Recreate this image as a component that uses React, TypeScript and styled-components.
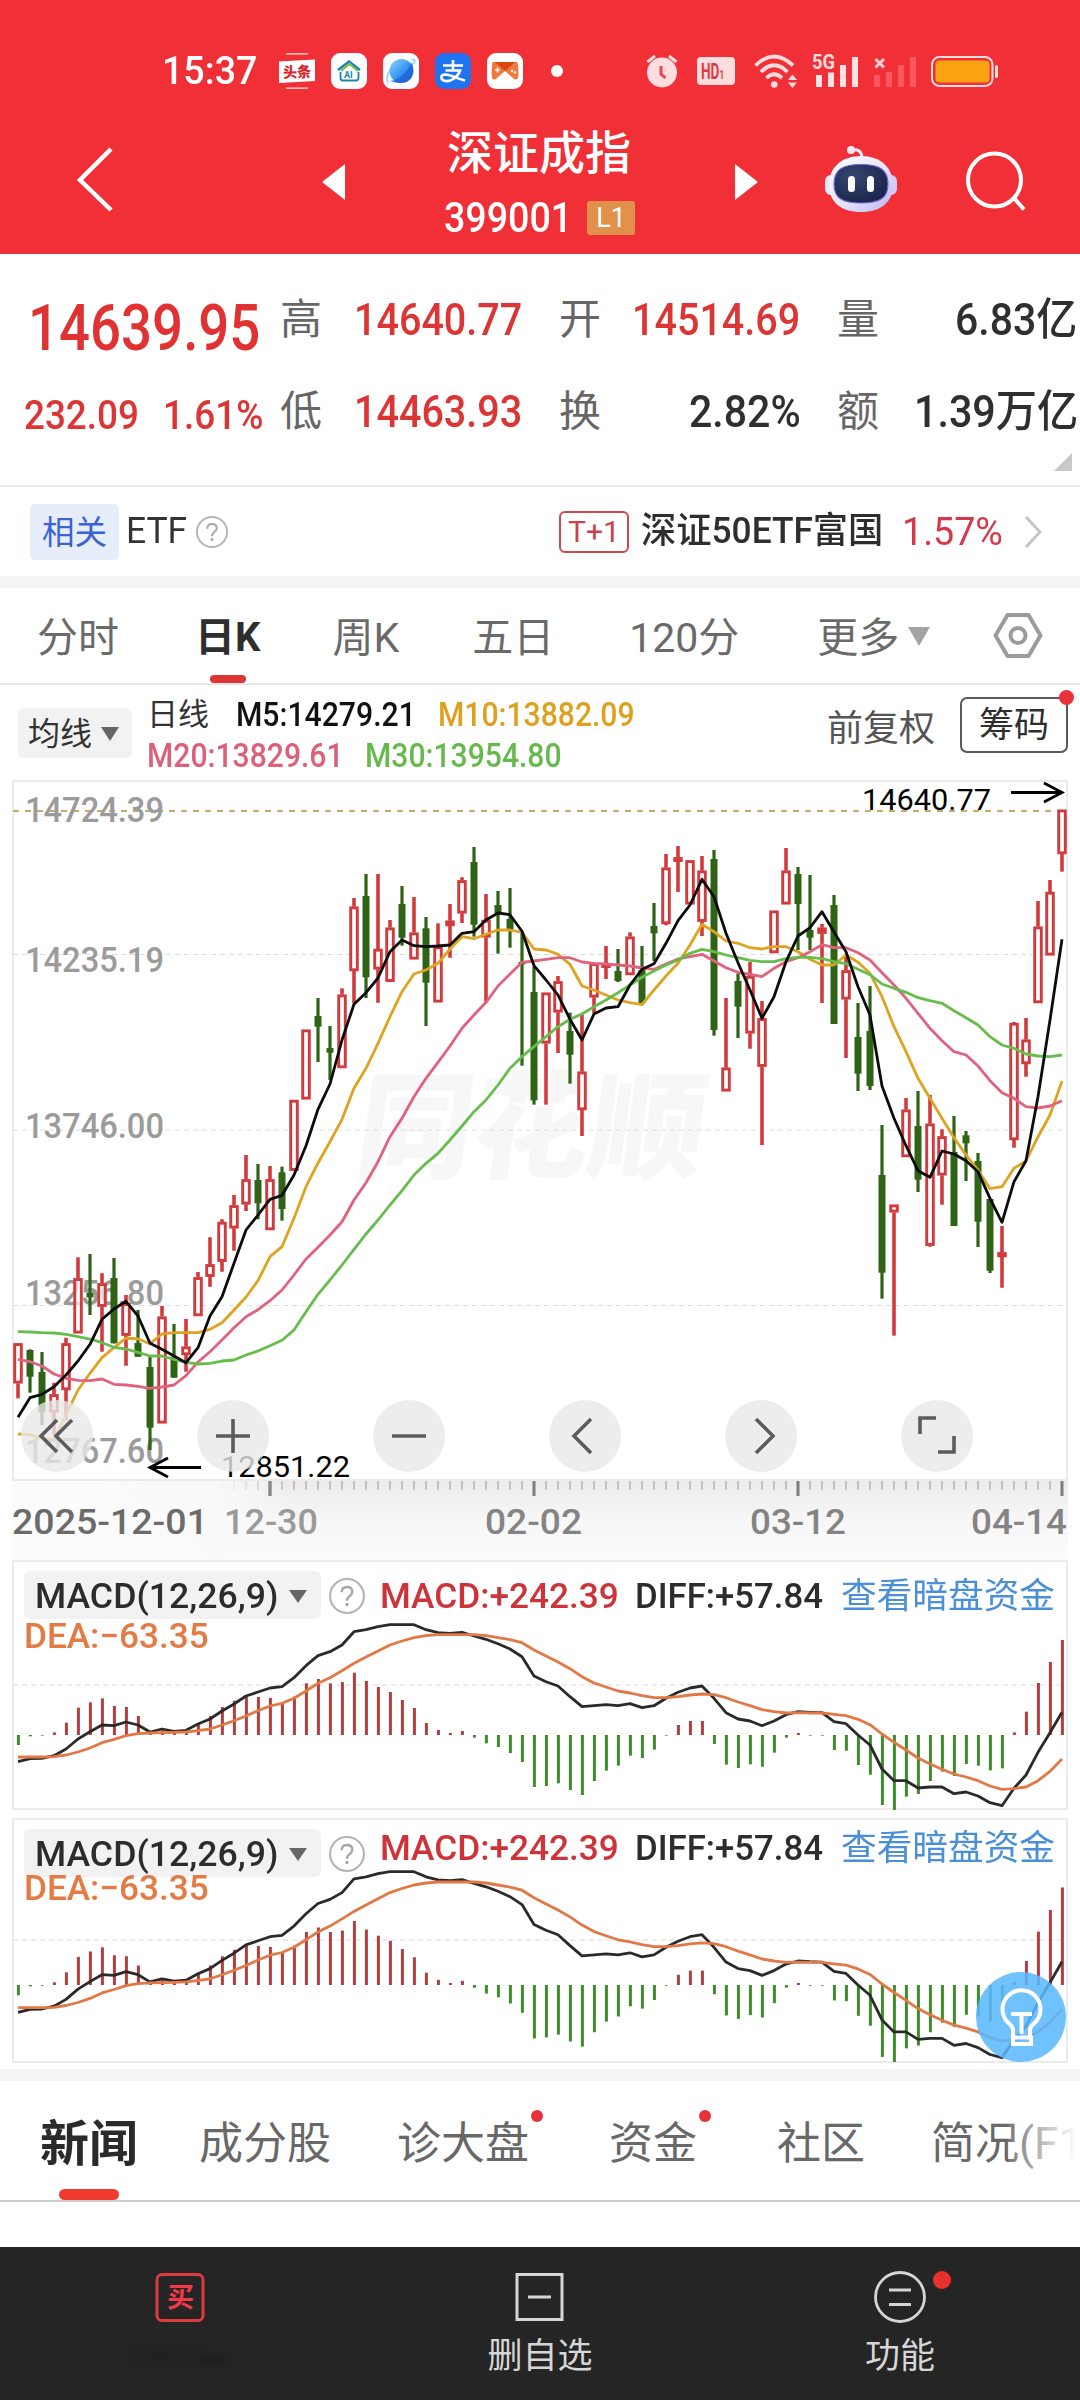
import React, { useLayoutEffect, useRef, useState } from "react";
import styled, { createGlobalStyle, css } from "styled-components";

const Global = createGlobalStyle`
  *, *::before, *::after { box-sizing: border-box; }
  body { margin: 0; background: #fff; }
  #root { width: 1080px; }
`;

const FONT = `Roboto, "Noto Sans CJK SC", sans-serif`;

/* ---------- text ---------- */

type TextProps = {
  $size: number;
  $color?: string;
  $weight?: number;
  $ml?: number;
};

const textStyle = css<TextProps>`
  font-family: ${FONT};
  font-size: ${(p) => p.$size}px;
  line-height: ${(p) => Math.round(p.$size * 1.2)}px;
  color: ${(p) => p.$color ?? "#333"};
  font-weight: ${(p) => p.$weight ?? 400};
  margin-left: ${(p) => p.$ml ?? 0}px;
  white-space: nowrap;
`;

const Label = styled.span<TextProps>`
  ${textStyle}
  flex: none;
`;

const FitBox = styled.span<TextProps & { $w: number }>`
  ${textStyle}
  display: block;
  flex: none;
  width: ${(p) => p.$w}px;
`;

const FitInner = styled.span`
  display: inline-block;
  transform-origin: 0 50%;
`;

type FitProps = {
  w: number;
  size: number;
  color?: string;
  weight?: number;
  ml?: number;
  children: string;
};

/** Condenses or widens a run of figures so that it fills a fixed column. */
function Fit({ w, size, color, weight, ml, children }: FitProps) {
  const ref = useRef<HTMLSpanElement>(null);
  const [k, setK] = useState(1);
  useLayoutEffect(() => {
    if (ref.current) setK(w / ref.current.offsetWidth);
  }, [w, children]);
  return (
    <FitBox $w={w} $size={size} $color={color} $weight={weight} $ml={ml}>
      <FitInner ref={ref} style={{ transform: `scaleX(${k})` }}>
        {children}
      </FitInner>
    </FitBox>
  );
}

/* ---------- page ---------- */

const Page = styled.div`
  width: 1080px;
  height: 2400px;
  display: flex;
  flex-direction: column;
  background: #fff;
  overflow: hidden;
`;

const Head = styled.header`
  height: 254px;
  flex: none;
  background: #f12f37;
  display: flex;
  flex-direction: column;
`;

const StatusBar = styled.div`
  height: 142px;
  padding: 0 82px 0 162px;
  display: flex;
  align-items: center;
`;

const AppIcons = styled.div`
  display: flex;
  gap: 16px;
  margin-left: 22px;
  align-items: center;
`;

const Drawing = styled.svg<{ $ml?: number }>`
  display: block;
  flex: none;
  overflow: visible;
  margin-left: ${(p) => p.$ml ?? 0}px;
`;

const StatusRight = styled.div`
  margin-left: auto;
  display: flex;
  align-items: center;
`;

const TitleBar = styled.div`
  height: 112px;
  display: flex;
  align-items: flex-start;
`;

const TitleBlock = styled.div`
  margin-left: 96px;
  width: 196px;
  margin-top: -16px;
  display: flex;
  flex-direction: column;
  align-items: center;
`;

const CodeRow = styled.div`
  display: flex;
  align-items: center;
  margin-top: 12px;
  width: 196px;
`;

const Level = styled.span`
  margin-left: 15px;
  width: 48px;
  height: 34px;
  border-radius: 3px;
  background: #e2914b;
  color: #fff;
  font: 400 27px/34px ${FONT};
  text-align: center;
`;

function StatusRow() {
  return (
    <StatusBar>
      <Fit w={95} size={38} weight={500} color="#fff">15:37</Fit>
      <AppIcons>
        <Drawing width="36" height="36" viewBox="0 0 36 36">
          <path d="M7 .8H29M7 35.2H29" stroke="#ffe6e6" strokeWidth="1.2" />
          <path d="M0 8.5L36 6.500V28L0 30z" fill="#fff" />
          <text x="4" y="24.500" fontSize="15" fontWeight="900" fill="#d8262c" fontFamily="Noto Sans CJK SC, sans-serif" textLength="28" lengthAdjust="spacingAndGlyphs" transform="rotate(-2 18 18)">头条</text>
        </Drawing>
        <Drawing width="36" height="36" viewBox="0 0 36 36">
          <rect width="36" height="36" rx="9" fill="#fff" />
          <path d="M7 17L18 8.500L29 17" stroke="#1a7fc0" strokeWidth="2.400" fill="none" />
          <path d="M10 18L18.500 11L27 18" stroke="#7ac043" strokeWidth="2.200" fill="none" />
          <path d="M9.500 19V25Q9.500 27.500 12 27.500H25Q27.500 27.500 27.500 25V19" stroke="#1a86b8" strokeWidth="1.800" fill="none" />
          <text x="13" y="25" fontSize="9" fontWeight="700" fill="#1a86b8" fontFamily="Roboto, sans-serif">AI</text>
        </Drawing>
        <Drawing width="36" height="36" viewBox="0 0 36 36">
          <defs>
            <linearGradient id="globe" x1="0" y1="0" x2="1" y2="1">
              <stop offset="0" stopColor="#8ad6ff" />
              <stop offset=".6" stopColor="#2f8cf0" />
              <stop offset="1" stopColor="#1456c8" />
            </linearGradient>
          </defs>
          <rect width="36" height="36" rx="9" fill="#fff" />
          <path d="M5 30Q2 24 8 16M29 7Q33 5 31 11" stroke="#9fd8fb" strokeWidth="2" fill="none" />
          <circle cx="18.500" cy="18" r="12" fill="url(#globe)" />
          <path d="M7 28Q21 26 29 9Q32 18 27 25Q20 33 7 28z" fill="#1d62d8" opacity=".75" />
        </Drawing>
        <Drawing width="36" height="36" viewBox="0 0 36 36">
          <rect width="36" height="36" rx="9" fill="#1e73f0" />
          <path d="M8 12.500H28M18 7V17M10.500 17.500H25C23 24 16 29 10.500 28C5 27 5 21.500 10.500 21.500C16 21.500 22 26 30 27.500" stroke="#fff" strokeWidth="2.600" fill="none" />
        </Drawing>
        <Drawing width="36" height="36" viewBox="0 0 36 36">
          <rect width="36" height="36" rx="9" fill="#fff" />
          <path d="M5.500 9H30.500Q32 18 31 25Q29 28 26 25L18 18L10 25Q7 28 5 25Q4 18 5.500 9z" fill="#f07a3c" />
          <path d="M8 9H28L18 18z" fill="#d9480f" />
          <path d="M8 17H13M10.500 14.500V19.500" stroke="#fff" strokeWidth="1.500" />
          <circle cx="25" cy="18" r="1.200" fill="#fff" />
          <circle cx="28" cy="19.500" r="1.200" fill="#fff" />
        </Drawing>
      </AppIcons>
      <Drawing $ml={28} width="12" height="12"><circle cx="6" cy="6" r="6" fill="#fff" /></Drawing>
      <StatusRight>
        <Drawing width="32" height="34" viewBox="0 0 32 34">
          <circle cx="16" cy="18.500" r="15" fill="#ffdcdd" />
          <path d="M1.500 8L9 2M23 2L30.500 8" stroke="#ffdcdd" strokeWidth="3" />
          <path d="M15 12V20L19.500 24" stroke="#e8444b" strokeWidth="3" fill="none" />
        </Drawing>
        <Drawing $ml={19} width="38" height="28" viewBox="0 0 38 28">
          <rect width="38" height="28" rx="4" fill="#ffdcdd" />
          <text x="4" y="22" fontSize="22" fontWeight="700" fill="#dd3b42" fontFamily="Roboto, sans-serif" textLength="23" lengthAdjust="spacingAndGlyphs">HD<tspan fontSize="13">1</tspan></text>
        </Drawing>
        <Drawing $ml={19} width="44" height="34" viewBox="0 0 44 34">
          <g stroke="#ffdcdd" fill="none" strokeWidth="3.800">
            <path d="M1.500 11.500Q20 -6.500 39 11.500" />
            <path d="M7 18Q20 4.500 33.500 18" />
            <path d="M12.500 24Q20 16.500 28 24" />
          </g>
          <circle cx="20.300" cy="30.500" r="3.300" fill="#ffdcdd" />
          <path d="M34 26L38.500 20.500L43 26zM34 28.500L38.500 34L43 28.500z" fill="#ffdcdd" />
        </Drawing>
        <Drawing $ml={14} width="47" height="34" viewBox="0 0 47 34">
          <text x="0" y="15" fontSize="20" fontWeight="700" fill="#ffdcdd" fontFamily="Roboto, sans-serif" textLength="23" lengthAdjust="spacingAndGlyphs">5G</text>
          <path d="M4 21h6v12h-6zM16 18.500h6V33h-6zM28 11h6V33h-6zM40 3h6V33h-6z" fill="#ffe3e4" />
        </Drawing>
        <Drawing $ml={15} width="43" height="34" viewBox="0 0 43 34">
          <path d="M1.500 5L10 13.500M10 5L1.500 13.500" stroke="#ffd0d2" strokeWidth="3" />
          <path d="M0 21h6v12h-6zM12 18h6V33h-6zM24 11h6V33h-6zM36 3h6V33h-6z" fill="#f8575e" />
        </Drawing>
        <Drawing $ml={14} width="67" height="31" viewBox="0 0 67 31">
          <rect x="1" y="1" width="60.500" height="29" rx="7.500" fill="none" stroke="#ffdcdd" strokeWidth="2" />
          <rect x="4.500" y="4.500" width="54" height="22" rx="4" fill="#fca313" />
          <rect x="64" y="9" width="3" height="13" rx="1.500" fill="#ffdcdd" />
        </Drawing>
      </StatusRight>
    </StatusBar>
  );
}

function TitleRow() {
  return (
    <TitleBar>
      <Drawing $ml={77} width="36" height="74">
        <path d="M34 7L3 38L34 68" fill="none" stroke="#fff" strokeWidth="4.500" />
      </Drawing>
      <Drawing $ml={209} width="23" height="74"><path d="M23 22V58L0 40z" fill="#fff" /></Drawing>
      <TitleBlock>
        <Label $size={46} $weight={500} $color="#fff">深证成指</Label>
        <CodeRow>
          <Fit w={128} size={42} weight={500} color="#fff" ml={3}>399001</Fit>
          <Level>L1</Level>
        </CodeRow>
      </TitleBlock>
      <Drawing $ml={98} width="23" height="74"><path d="M0 22V58L23 40z" fill="#fff" /></Drawing>
      <Drawing $ml={67} width="72" height="74" viewBox="0 0 72 74">
        <defs>
          <linearGradient id="shell" x1="0" y1="0" x2="1" y2="1">
            <stop offset="0" stopColor="#ffffff" />
            <stop offset=".55" stopColor="#e4e6fb" />
            <stop offset="1" stopColor="#b9b0ee" />
          </linearGradient>
          <radialGradient id="visor" cx=".35" cy=".3" r=".9">
            <stop offset="0" stopColor="#35466f" />
            <stop offset="1" stopColor="#141f42" />
          </radialGradient>
        </defs>
        <path d="M26 8Q36 6 37 15" stroke="#f4eefc" strokeWidth="3" fill="none" />
        <circle cx="26" cy="8" r="4" fill="#fbe9ee" />
        <rect x="0" y="33" width="12" height="20" rx="6" fill="#e6e6fa" />
        <rect x="60" y="33" width="12" height="20" rx="6" fill="#d3cdf6" />
        <path d="M36 14C56 14 68 26 68 43C68 60 56 70 36 70C16 70 4 60 4 43C4 26 16 14 36 14z" fill="url(#shell)" />
        <path d="M36 22.500C55 22.500 63 28 63 42C63 56 55 61 36 61C17 61 9 56 9 42C9 28 17 22.500 36 22.500z" fill="url(#visor)" stroke="#7a63d8" strokeWidth="1.200" />
        <rect x="23" y="34" width="7" height="16" rx="3.500" fill="#fff" />
        <rect x="42" y="34" width="7" height="16" rx="3.500" fill="#fff" />
      </Drawing>
      <Drawing $ml={69} width="60" height="74">
        <circle cx="28.500" cy="38" r="26.500" fill="none" stroke="#fff" strokeWidth="4" />
        <path d="M48 56L58 67.500" stroke="#fff" strokeWidth="4" />
      </Drawing>
    </TitleBar>
  );
}

/* ---------- quote ---------- */

const Quote = styled.section`
  height: 233px;
  flex: none;
  border-bottom: 2px solid #ececec;
  display: grid;
  grid-template-rows: 130px 56px 1fr;
`;

const QuoteRow = styled.div`
  display: flex;
  align-items: center;
  &:first-child { padding-top: 2px; }
`;

const Corner = styled.i`
  justify-self: end;
  margin: 13px 8px 0 0;
  width: 18px;
  height: 18px;
  background: #c9c9c9;
  clip-path: polygon(100% 0, 100% 100%, 0 100%);
`;

const RED = "#dc3535";
const GREY = "#666";

const PriceLead = styled.div<{ $top?: number }>`
  width: 280px;
  display: flex;
  padding-top: ${(p) => p.$top ?? 0}px;
`;

function QuotePanel() {
  return (
    <Quote>
      <QuoteRow>
        <PriceLead $top={17}>
          <Fit w={232} size={64} weight={500} color="#e03232" ml={28}>14639.95</Fit>
        </PriceLead>
        <Label $size={42} $color={GREY}>高</Label>
        <Fit w={168} size={44} weight={500} color={RED} ml={32}>14640.77</Fit>
        <Label $size={42} $color={GREY} $ml={37}>开</Label>
        <Fit w={168} size={44} weight={500} color={RED} ml={31}>14514.69</Fit>
        <Label $size={42} $color={GREY} $ml={37}>量</Label>
        <Fit w={122} size={44} weight={500} color="#2f2f2f" ml={76}>6.83亿</Fit>
      </QuoteRow>
      <QuoteRow>
        <PriceLead $top={6}>
          <Fit w={115} size={41} weight={500} color={RED} ml={24}>232.09</Fit>
          <Fit w={101} size={41} weight={500} color={RED} ml={24}>1.61%</Fit>
        </PriceLead>
        <Label $size={42} $color={GREY}>低</Label>
        <Fit w={168} size={44} weight={500} color={RED} ml={32}>14463.93</Fit>
        <Label $size={42} $color={GREY} $ml={37}>换</Label>
        <Fit w={112} size={44} weight={500} color="#2f2f2f" ml={88}>2.82%</Fit>
        <Label $size={42} $color={GREY} $ml={36}>额</Label>
        <Fit w={164} size={44} weight={500} color="#2f2f2f" ml={35}>1.39万亿</Fit>
      </QuoteRow>
      <Corner />
    </Quote>
  );
}

/* ---------- related fund ---------- */

const Related = styled.section`
  height: 89px;
  flex: none;
  display: flex;
  align-items: center;
  padding-left: 30px;
`;

const BlueTag = styled.span`
  width: 89px;
  height: 56px;
  border-radius: 5px;
  background: #e6eefc;
  color: #3c63d6;
  font: 400 32.5px/58px ${FONT};
  text-align: center;
`;

const DayTag = styled.span`
  margin-left: 331px;
  width: 70px;
  height: 42px;
  border: 2px solid #cb4a52;
  border-radius: 6px;
  color: #cf3f49;
  font: 400 30px/38px ${FONT};
  text-align: center;
`;

const Band = styled.div`
  height: 12px;
  flex: none;
  background: #f4f4f4;
`;

function Question({ r, ml }: { r: number; ml: number }) {
  const s = r * 2;
  return (
    <Drawing $ml={ml} width={s} height={s} viewBox="0 0 34 34">
      <circle cx="17" cy="17" r="16" fill="none" stroke="#b4b4b4" strokeWidth="2" />
      <path d="M12 13.500Q12 8.500 17 8.500Q22 8.500 22 13Q22 15.500 19 17.500Q17 19 17 21.500" fill="none" stroke="#a8a8a8" strokeWidth="2.200" />
      <circle cx="17" cy="25" r="1.600" fill="#a8a8a8" />
    </Drawing>
  );
}

/* ---------- period tabs ---------- */

const Periods = styled.nav`
  height: 97px;
  flex: none;
  border-bottom: 2px solid #e6e6e6;
  display: flex;
  align-items: stretch;
`;

const Period = styled.div<{ $ml: number; $on?: boolean }>`
  margin-left: ${(p) => p.$ml}px;
  display: flex;
  flex-direction: column;
  align-items: center;
  font: ${(p) => (p.$on ? 700 : 400)} ${(p) => (p.$on ? 40 : 41)}px/100px ${FONT};
  color: ${(p) => (p.$on ? "#2e2e2e" : "#6a6a6a")};
  white-space: nowrap;
  &::after {
    content: "";
    width: 36px;
    height: 9px;
    margin-top: -13px;
    border-radius: 4px;
    background: ${(p) => (p.$on ? "#dd3434" : "transparent")};
  }
`;

/* ---------- averages ---------- */

const Averages = styled.section`
  height: 95px;
  flex: none;
  display: flex;
`;

const Picker = styled.div<{ $w: number; $h: number }>`
  width: ${(p) => p.$w}px;
  height: ${(p) => p.$h}px;
  flex: none;
  display: flex;
  align-items: center;
  border-radius: 6px;
  background: #f2f2f2;
`;

const AveragePicker = styled(Picker)`
  margin: 23px 0 0 18px;
  padding: 2px 0 0 10px;
`;

const AverageLines = styled.div`
  width: 695px;
  padding: 9px 0 0 15px;
`;

const AverageLine = styled.div`
  height: 41px;
  display: flex;
  align-items: center;
`;

const ChipButton = styled.div`
  position: relative;
  margin: 12px 0 0 25px;
  width: 108px;
  height: 56px;
  border: 2px solid #5a5a5a;
  border-radius: 7px;
  font: 400 35px/54px ${FONT};
  color: #2e2e2e;
  text-align: center;
`;

const Adjust = styled.div`
  margin-top: 23px;
  font: 400 36px/43px ${FONT};
  color: #555;
`;

const Dot = styled.i<{ $s: number; $top: number; $right: number }>`
  position: absolute;
  top: ${(p) => p.$top}px;
  right: ${(p) => p.$right}px;
  width: ${(p) => p.$s}px;
  height: ${(p) => p.$s}px;
  border-radius: 50%;
  background: #e8313a;
`;

const Caret = ({ ml, w, h, c }: { ml: number; w: number; h: number; c: string }) => (
  <Drawing $ml={ml} width={w} height={h}>
    <path d={`M0 0H${w}L${w / 2} ${h}z`} fill={c} />
  </Drawing>
);

/* ---------- candle chart ---------- */

type Candle = [up: 0 | 1, high: number, top: number, bottom: number, low: number];

// Vertical values are thirds of a pixel below the chart's origin.
const CANDLES: Candle[] = [
  [1, 1720, 1720, 1840, 1885], [0, 1738, 1740, 1820, 1868], [0, 1746, 1806, 1927, 1965], [1, 1838, 1873, 1927, 1995],
  [1, 1703, 1720, 1860, 1950], [1, 1462, 1525, 1690, 1690], [0, 1452, 1568, 1582, 1635], [1, 1510, 1540, 1610, 1745],
  [0, 1464, 1524, 1720, 1720], [1, 1575, 1600, 1697, 1787], [0, 1620, 1719, 1760, 1760], [0, 1760, 1791, 1973, 2040],
  [1, 1608, 1640, 1960, 1960], [0, 1662, 1760, 1823, 1823], [1, 1647, 1730, 1755, 1805], [1, 1506, 1522, 1638, 1638],
  [1, 1402, 1483, 1520, 1550], [1, 1348, 1356, 1475, 1505], [1, 1275, 1306, 1375, 1442], [1, 1155, 1228, 1303, 1323],
  [0, 1182, 1230, 1300, 1348], [1, 1188, 1228, 1380, 1380], [0, 1190, 1207, 1317, 1352], [1, 990, 990, 1202, 1202],
  [1, 779, 779, 988, 988], [0, 684, 738, 770, 876], [0, 768, 834, 848, 930], [1, 655, 674, 894, 894],
  [1, 384, 410, 603, 700], [0, 312, 378, 622, 684], [1, 312, 537, 598, 698], [1, 450, 473, 635, 635],
  [0, 348, 402, 503, 527], [1, 381, 488, 568, 568], [0, 441, 475, 638, 768], [1, 460, 530, 697, 697],
  [1, 402, 452, 468, 563], [1, 322, 331, 430, 459], [0, 231, 276, 464, 500], [1, 372, 450, 502, 695],
  [0, 363, 405, 430, 551], [0, 354, 447, 478, 533], [0, 485, 576, 583, 887], [0, 590, 666, 991, 1004],
  [1, 668, 668, 820, 1004], [1, 618, 634, 727, 849], [0, 728, 783, 854, 941], [1, 735, 905, 1020, 1098],
  [1, 580, 580, 682, 730], [1, 528, 580, 590, 627], [0, 537, 603, 633, 636], [1, 487, 500, 615, 615],
  [0, 528, 600, 700, 700], [0, 399, 468, 490, 573], [1, 252, 293, 462, 466], [1, 228, 262, 272, 366],
  [1, 271, 271, 403, 403], [1, 258, 302, 455, 498], [0, 240, 267, 780, 797], [1, 684, 893, 964, 964],
  [0, 610, 633, 710, 804], [1, 576, 618, 790, 836], [1, 693, 745, 890, 1125], [1, 422, 422, 549, 549],
  [1, 234, 302, 403, 403], [0, 291, 312, 402, 540], [0, 315, 480, 503, 540], [1, 462, 473, 491, 699],
  [0, 375, 405, 762, 762], [1, 555, 601, 688, 864], [0, 699, 801, 911, 963], [0, 648, 783, 948, 960],
  [0, 1065, 1215, 1508, 1586], [1, 1304, 1304, 1327, 1697], [1, 984, 1019, 1161, 1161], [0, 963, 1068, 1229, 1266],
  [1, 975, 1061, 1427, 1430], [1, 1078, 1099, 1216, 1304], [0, 1038, 1146, 1368, 1368], [0, 1083, 1096, 1120, 1233],
  [0, 1149, 1173, 1355, 1431], [0, 1287, 1287, 1502, 1509], [1, 1368, 1447, 1461, 1553], [1, 756, 759, 1110, 1133],
  [1, 744, 809, 882, 920], [1, 393, 470, 699, 699], [1, 330, 366, 556, 556], [1, 119, 119, 252, 305],
];

const M5 = [1942, 1883, 1873, 1850, 1815, 1773, 1723, 1648, 1617, 1594, 1638, 1720, 1738, 1758, 1778, 1733, 1638, 1580, 1480, 1380, 1335, 1288, 1276, 1215, 1127, 1018, 942, 810, 703, 668, 624, 545, 510, 527, 530, 528, 525, 490, 485, 450, 429, 434, 484, 587, 630, 675, 748, 810, 732, 714, 710, 645, 598, 581, 520, 452, 405, 328, 380, 490, 578, 660, 745, 680, 575, 498, 473, 425, 486, 545, 650, 735, 948, 1045, 1127, 1202, 1222, 1143, 1152, 1172, 1205, 1285, 1357, 1235, 1172, 980, 750, 508];
const M10 = [1992, 1994, 2005, 2008, 1935, 1860, 1810, 1763, 1733, 1704, 1707, 1721, 1692, 1688, 1688, 1688, 1678, 1658, 1620, 1581, 1532, 1460, 1430, 1345, 1250, 1179, 1115, 1048, 955, 895, 820, 740, 665, 612, 600, 580, 537, 500, 506, 493, 480, 480, 487, 537, 540, 553, 583, 648, 660, 675, 690, 698, 704, 660, 618, 580, 525, 463, 485, 513, 520, 533, 537, 530, 530, 545, 568, 585, 585, 555, 577, 610, 680, 770, 845, 925, 985, 1045, 1103, 1155, 1200, 1256, 1250, 1195, 1173, 1100, 1035, 933];
const M20 = [1768, 1775, 1788, 1812, 1825, 1831, 1832, 1827, 1843, 1845, 1849, 1855, 1851, 1845, 1817, 1776, 1745, 1710, 1673, 1640, 1619, 1592, 1560, 1515, 1467, 1432, 1395, 1355, 1290, 1238, 1175, 1100, 1045, 980, 925, 877, 828, 775, 735, 697, 648, 612, 577, 573, 568, 563, 563, 576, 580, 582, 585, 588, 594, 598, 582, 567, 560, 553, 573, 593, 607, 613, 620, 595, 575, 563, 545, 524, 533, 533, 548, 570, 608, 645, 685, 730, 775, 812, 845, 855, 888, 932, 968, 985, 1010, 1014, 1008, 992];
const M30 = [1685, 1686, 1688, 1689, 1693, 1700, 1707, 1718, 1732, 1737, 1747, 1758, 1758, 1768, 1777, 1782, 1780, 1773, 1770, 1755, 1743, 1727, 1711, 1680, 1625, 1573, 1530, 1485, 1438, 1392, 1350, 1305, 1262, 1215, 1180, 1150, 1110, 1068, 1025, 990, 945, 895, 860, 830, 800, 770, 748, 732, 710, 690, 668, 645, 622, 603, 585, 570, 550, 538, 545, 555, 563, 571, 575, 575, 566, 562, 562, 566, 575, 581, 598, 614, 642, 655, 667, 683, 692, 700, 722, 743, 765, 800, 825, 835, 852, 858, 860, 855];

const xAt = (i: number) => 18 + i * 12;
const poly = (v: number[], y: (n: number) => number) => v.map((n, i) => `${xAt(i)},${y(n).toFixed(1)}`).join(" ");

const ChartArea = styled.section`
  position: relative;
  height: 780px;
  flex: none;
`;

const Controls = styled.div`
  position: absolute;
  left: 21px;
  bottom: 88px;
  display: flex;
  gap: 104px;
`;

const Round = styled.div`
  width: 72px;
  height: 72px;
  border-radius: 50%;
  background: rgba(232, 232, 232, 0.8);
`;

const CONTROL_PATHS = [
  "M36 20L20 36L36 52M51 20L35 36L51 52",
  "M19 36H53M36 19V53",
  "M19 36H53",
  "M42 19L25 36L42 53",
  "M31 19L48 36L31 53",
  "M19 34V18H35M37 52H53V36",
];

const UP = "#d23b3d";
const DOWN = "#2f6416";

const PRICE_LABELS: [string, number][] = [
  ["14724.39", 41.5], ["14235.19", 191], ["13746.00", 357], ["13256.80", 524], ["12767.60", 682],
];
const DATES: [string, number, number, string][] = [
  ["2025-12-01", 12, 196, "#6b6b6b"], ["12-30", 224, 94, "#9a9a9a"], ["02-02", 485, 97, "#848484"],
  ["03-12", 750, 96, "#848484"], ["04-14", 971, 96, "#848484"],
];

function CandleChart() {
  // The candle data starts 10px above the plot frame.
  const y = (v: number) => v / 3 - 10;
  return (
    <ChartArea>
      <Drawing width="1080" height="780" viewBox="0 0 1080 780" fontFamily="Roboto, sans-serif">
        <defs>
          <linearGradient id="axis" x1="0" y1="0" x2="0" y2="1">
            <stop offset="0" stopColor="#ebebeb" />
            <stop offset=".5" stopColor="#f7f7f7" />
            <stop offset="1" stopColor="#fbfbfb" />
          </linearGradient>
          <linearGradient id="axisFade" x1="0" y1="0" x2="1" y2="0">
            <stop offset="0" stopColor="#fcfcfc" />
            <stop offset=".75" stopColor="#fafafa" stopOpacity=".9" />
            <stop offset="1" stopColor="#fafafa" stopOpacity="0" />
          </linearGradient>
        </defs>
        <rect x="12" y="700" width="1056" height="80" fill="url(#axis)" />
        {Array.from({ length: 71 }, (_, k) => k + 17).map((i) => (
          <path key={i} d={`M${xAt(i)} 701V${i % 22 === 21 ? 716 : 710}`} stroke={i % 22 === 21 ? "#7d7d7d" : "#999"} strokeWidth={i % 22 === 21 ? 3 : 1} />
        ))}
        <rect x="12" y="700" width="278" height="80" fill="url(#axisFade)" />
        <path d={`M${xAt(21)} 701V716`} stroke="#888" strokeWidth="3" />
        {DATES.map(([t, x, w, c]) => (
          <text key={t} x={x} y="754" fontSize="35" fontWeight="500" fill={c} textLength={w} lengthAdjust="spacingAndGlyphs">{t}</text>
        ))}
        <rect x="13" y="1" width="1054" height="699" fill="none" stroke="#ebebeb" strokeWidth="2" />
        <text transform="skewX(-8)" x="407" y="389" fontSize="116" fontWeight="900" fill="#f7f7f7" fontFamily="Noto Sans CJK SC, sans-serif">同花顺</text>
        <path d="M13 174.500H1066M13 350H1066M13 525.500H1066" stroke="#dedede" strokeWidth="1" strokeDasharray="5 4" />
        <path d="M13 31H1066" stroke="#c4ab6c" strokeWidth="2" strokeDasharray="6 6" />
        {PRICE_LABELS.map(([t, b]) => (
          <text key={t} x="25" y={b + 0.5} fontSize="35.500" fontWeight="500" fill="#9b9b9b" textLength="139" lengthAdjust="spacingAndGlyphs">{t}</text>
        ))}
        {CANDLES.map(([up, h, t, b, l], i) => {
          const x = xAt(i);
          return up ? (
            <g key={i} stroke={UP} fill="none">
              <path d={`M${x} ${y(h)}V${y(t)}M${x} ${y(b)}V${y(l)}`} strokeWidth="3.600" />
              <rect x={x - 3.3} y={y(t) + 1.2} width="6.600" height={Math.max(2, y(b) - y(t) - 2.4)} strokeWidth="2.900" fill={b - t < 20 ? UP : "#fff"} fillOpacity={b - t < 20 ? 1 : 0.65} />
            </g>
          ) : (
            <g key={i} fill={DOWN}>
              <rect x={x - 1.6} y={y(h)} width="3.200" height={y(l) - y(h)} />
              <rect x={x - 3.5} y={y(t)} width="7" height={y(b) - y(t)} />
            </g>
          );
        })}
        <g fill="none" strokeWidth="2.800" strokeLinejoin="round">
          <polyline points={poly(M10, y)} stroke="#dda321" />
          <polyline points={poly(M20, y)} stroke="#e2617c" />
          <polyline points={poly(M30, y)} stroke="#66bd4b" />
          <polyline points={poly(M5, y)} stroke="#0c0c0c" />
        </g>
        <text x="862" y="30" fontSize="29.500" fill="#000" textLength="129" lengthAdjust="spacingAndGlyphs">14640.77</text>
        <text x="221" y="697" fontSize="29.500" fill="#000" textLength="129" lengthAdjust="spacingAndGlyphs">12851.22</text>
        <path d="M1011 12.500H1061M1044 3L1062 12.500L1044 22M201 687.500H151M168 678L150 687.500L168 697" fill="none" stroke="#000" strokeWidth="2.800" />
      </Drawing>
      <Controls>
        {CONTROL_PATHS.map((d) => (
          <Round key={d}>
            <Drawing width="72" height="72"><path d={d} fill="none" stroke="#5c5c5c" strokeWidth="3.600" /></Drawing>
          </Round>
        ))}
      </Controls>
    </ChartArea>
  );
}

/* ---------- MACD ---------- */

const BARS = [585, 559, 557, 547, 518, 473, 457, 445, 468, 471, 498, 545, 541, 548, 543, 523, 498, 471, 452, 440, 441, 444, 460, 440, 400, 387, 400, 396, 368, 393, 411, 426, 450, 474, 519, 540, 549, 543, 563, 580, 591, 609, 636, 711, 708, 700, 720, 735, 693, 662, 647, 617, 624, 599, 557, 525, 513, 513, 582, 644, 654, 643, 650, 608, 563, 549, 557, 557, 600, 602, 645, 674, 765, 780, 740, 732, 693, 665, 678, 642, 647, 661, 655, 547, 485, 399, 336, 270].map((v) => v - 555);
const DIFF = [635, 626, 625, 617, 597, 567, 545, 525, 527, 516, 525, 546, 537, 544, 541, 522, 507, 483, 462, 438, 426, 414, 410, 383, 347, 317, 305, 285, 245, 239, 230, 224, 224, 224, 239, 248, 250, 247, 258, 268, 281, 297, 320, 378, 395, 408, 440, 470, 467, 464, 467, 461, 473, 467, 445, 427, 414, 408, 445, 488, 507, 513, 527, 513, 494, 485, 487, 488, 515, 521, 555, 585, 657, 692, 692, 714, 711, 711, 731, 726, 738, 758, 767, 715, 675, 607, 548, 487].map((v) => v - 555);
const DEA = [621, 621, 621, 620, 615, 606, 594, 578, 568, 557, 551, 549, 548, 547, 546, 542, 537, 525, 512, 498, 482, 468, 460, 445, 423, 400, 383, 362, 340, 321, 303, 285, 273, 263, 257, 254, 254, 254, 254, 257, 263, 269, 278, 300, 318, 336, 356, 380, 399, 411, 423, 429, 437, 443, 443, 440, 435, 432, 434, 443, 456, 467, 479, 485, 489, 488, 489, 489, 493, 497, 508, 524, 552, 577, 600, 624, 642, 658, 672, 681, 692, 708, 718, 716, 711, 692, 664, 627].map((v) => v - 555);

const Panel = styled.section<{ $h: number; $mb: number }>`
  position: relative;
  height: ${(p) => p.$h}px;
  margin-bottom: ${(p) => p.$mb}px;
  flex: none;
`;

const Plot = styled.svg`
  position: absolute;
  inset: 0;
  display: block;
`;

const PanelHead = styled.div`
  position: relative;
  display: flex;
  align-items: flex-start;
  padding: 11px 0 0 24px;
  height: 59px;
`;

const Values = styled.div<{ $up: number }>`
  display: flex;
  align-items: center;
  margin-top: ${(p) => 2 - p.$up}px;
  height: 46px;
`;

const HelpSlot = styled.div`
  padding-top: 7px;
`;

const DeaRow = styled.div<{ $up: number }>`
  position: relative;
  margin-top: ${(p) => -4 - p.$up}px;
`;

const MacdPicker = styled(Picker)`
  padding: 2px 0 0 11px;
`;

type MacdProps = { h: number; zero: number; grid: number; k: number; up: number; mb: number; children?: React.ReactNode };

function Macd({ h, zero, grid, k, up, mb, children }: MacdProps) {
  const y = (v: number) => zero + (v * k) / 3;
  return (
    <Panel $h={h} $mb={mb}>
      <Plot width="1080" height={h}>
        <rect x="13" y="1" width="1054" height={h - 2} fill="#fff" stroke="#ebebeb" strokeWidth="2" />
        <path d={`M13 ${grid}H1066`} stroke="#e6e6e6" strokeWidth="1.500" strokeDasharray="5 4" />
        {BARS.map((v, i) => (
          <path key={i} d={`M${xAt(i) + 0.4} ${zero}V${y(v)}`} stroke={v < 0 ? "#b23e3e" : "#3f8c2c"} strokeWidth="3" />
        ))}
      </Plot>
      <PanelHead>
        <MacdPicker $w={297} $h={48}>
          <Fit w={243} size={35.5} weight={500} color="#2c2c2c">MACD(12,26,9)</Fit>
          <Caret ml={11} w={18} h={13} c="#666" />
        </MacdPicker>
        <HelpSlot><Question r={18} ml={8} /></HelpSlot>
        <Values $up={up}>
          <Fit w={239} size={35.5} weight={500} color="#cc3439" ml={15}>MACD:+242.39</Fit>
          <Fit w={188} size={35.5} weight={500} color="#2c2c2c" ml={16}>DIFF:+57.84</Fit>
          <Fit w={214} size={35.5} color="#4a8fd8" ml={18}>查看暗盘资金</Fit>
        </Values>
      </PanelHead>
      <DeaRow $up={up}>
        <Fit w={185} size={35.5} weight={500} color="#e47b45" ml={24}>DEA:−63.35</Fit>
      </DeaRow>
      <Plot width="1080" height={h}>
        <g fill="none" strokeWidth="2.800" strokeLinejoin="round">
          <polyline points={poly(DIFF, y)} stroke="#2a2a2a" />
          <polyline points={poly(DEA, y)} stroke="#e27845" />
        </g>
      </Plot>
      {children}
    </Panel>
  );
}

const Tip = styled.div`
  position: absolute;
  right: 14px;
  bottom: 1px;
  width: 90px;
  height: 90px;
  border-radius: 50%;
  background: rgba(88, 184, 255, 0.86);
`;

/* ---------- news tabs and bottom bar ---------- */

const NewsTabs = styled.nav`
  position: relative;
  height: 121px;
  flex: none;
  display: flex;
  border-bottom: 2px solid #c9cfcf;
  overflow: hidden;
`;

const NewsTab = styled.div<{ $ml: number; $on?: boolean }>`
  position: relative;
  flex: none;
  margin-left: ${(p) => p.$ml}px;
  display: flex;
  flex-direction: column;
  align-items: center;
  font-family: ${FONT};
  font-size: ${(p) => (p.$on ? 49 : 44)}px;
  font-weight: ${(p) => (p.$on ? 700 : 400)};
  line-height: 127px;
  color: ${(p) => (p.$on ? "#2a2a2a" : "#686868")};
  white-space: nowrap;
`;

const NewsBar = styled.i`
  width: 60px;
  height: 12px;
  margin-top: -19px;
  border-radius: 6px;
  background: #f23b30;
`;

const FadeEdge = styled.div`
  position: absolute;
  right: 0;
  top: 0;
  width: 72px;
  height: 118px;
  background: linear-gradient(90deg, rgba(255, 255, 255, 0.1), #fff 95%);
`;

const Bottom = styled.footer`
  margin-top: auto;
  height: 153px;
  flex: none;
  background: #252525;
  display: grid;
  grid-template-columns: repeat(3, 1fr);
`;

const Action = styled.div`
  display: flex;
  flex-direction: column;
  align-items: center;
  padding-top: 24px;
  font: 400 35px/42px ${FONT};
  color: #d6d6d6;
`;

const ActionName = styled.span`
  margin-top: 13px;
`;

const Smudge = styled.div`
  width: 106px;
  height: 32px;
  margin-top: 18px;
  filter: blur(5px);
  background: radial-gradient(ellipse at 82% 60%, #161616 0, transparent 20%),
    radial-gradient(ellipse at 30% 50%, #202020 0, transparent 60%);
`;

export default function App() {
  return (
    <>
      <Global />
      <Page>
        <Head>
          <StatusRow />
          <TitleRow />
        </Head>
        <QuotePanel />
        <Related>
          <BlueTag>相关</BlueTag>
          <Fit w={61} size={36} color="#333" ml={7}>ETF</Fit>
          <Question r={16} ml={9} />
          <DayTag>T+1</DayTag>
          <Fit w={242} size={36} color="#2e2e2e" weight={500} ml={12}>深证50ETF富国</Fit>
          <Fit w={101} size={38} color="#d6384a" ml={19}>1.57%</Fit>
          <Drawing $ml={20} width="20" height="34"><path d="M3 2L17 17L3 32" fill="none" stroke="#c4c4c4" strokeWidth="2.800" /></Drawing>
        </Related>
        <Band />
        <Periods>
          <Period $ml={37}>分时</Period>
          <Period $ml={76} $on>日K</Period>
          <Period $ml={72}>周K</Period>
          <Period $ml={73}>五日</Period>
          <Period $ml={75}>120分</Period>
          <Period $ml={78}>更多</Period>
          <Drawing $ml={9} width="22" height="96"><path d="M0 39H22L11 58z" fill="#a3a3a3" /></Drawing>
          <Drawing $ml={63} width="50" height="96" viewBox="0 0 50 96">
            <path d="M14.500 27H35.500L47.500 47.500L35.500 68H14.500L2.500 47.500z" fill="none" stroke="#9b9b9b" strokeWidth="4" strokeLinejoin="round" />
            <circle cx="25" cy="47.500" r="7.500" fill="none" stroke="#9b9b9b" strokeWidth="4" />
          </Drawing>
        </Periods>
        <Averages>
          <AveragePicker $w={114} $h={50}>
            <Label $size={32} $color="#333">均线</Label>
            <Caret ml={9} w={18} h={14} c="#666" />
          </AveragePicker>
          <AverageLines>
            <AverageLine>
              <Label $size={31} $color="#333">日线</Label>
              <Fit w={180} size={33} weight={500} color="#111" ml={27}>M5:14279.21</Fit>
              <Fit w={197} size={33} weight={500} color="#dda01f" ml={22}>M10:13882.09</Fit>
            </AverageLine>
            <AverageLine>
              <Fit w={197} size={33} weight={500} color="#dd6079">M20:13829.61</Fit>
              <Fit w={197} size={33} weight={500} color="#66b94c" ml={21}>M30:13954.80</Fit>
            </AverageLine>
          </AverageLines>
          <Adjust>前复权</Adjust>
          <ChipButton>
            筹码
            <Dot $s={15} $top={-9} $right={-8} />
          </ChipButton>
        </Averages>
        <CandleChart />
        <Macd h={250} zero={175} grid={125} k={1} up={0} mb={8} />
        <Macd h={245} zero={167} grid={122} k={1.027} up={6} mb={6}>
          <Tip>
            <Drawing width="90" height="90" viewBox="0 0 90 90" fill="none" stroke="#fff" strokeWidth="4">
              <path d="M37 64V58Q37 55 33 51.500A19 19 0 1 1 58 51.500Q54 55 54 58V64M35 42H56M45.500 42V62M37 65.500H55V72H37z" />
            </Drawing>
          </Tip>
        </Macd>
        <Band />
        <NewsTabs>
          <NewsTab $ml={40} $on>新闻<NewsBar /></NewsTab>
          <NewsTab $ml={61}>成分股</NewsTab>
          <NewsTab $ml={66}>诊大盘<Dot $s={12} $top={29} $right={-14} /></NewsTab>
          <NewsTab $ml={80}>资金<Dot $s={12} $top={29} $right={-14} /></NewsTab>
          <NewsTab $ml={80}>社区</NewsTab>
          <NewsTab $ml={66}>简况(F1</NewsTab>
          <FadeEdge />
        </NewsTabs>
        <Bottom>
          <Action>
            <Drawing width="52" height="52" viewBox="0 0 52 52">
              <rect x="3" y="3.500" width="46" height="46" rx="5" fill="none" stroke="#dc3b3f" strokeWidth="3" />
              <text x="13" y="36" fontSize="27" fontWeight="700" fill="#f03a48" fontFamily="Noto Sans CJK SC, sans-serif">买</text>
            </Drawing>
            <Smudge />
          </Action>
          <Action>
            <Drawing width="52" height="52" viewBox="0 0 52 52">
              <path d="M3 3.500H48V48.500H3zM14 26H37" fill="none" stroke="#d6d6d6" strokeWidth="3" />
            </Drawing>
            <ActionName>删自选</ActionName>
          </Action>
          <Action>
            <Drawing width="52" height="52" viewBox="0 0 52 52">
              <circle cx="26" cy="26" r="24.500" fill="none" stroke="#d6d6d6" strokeWidth="2.800" />
              <path d="M15 19H37M15 33.500H37" stroke="#d6d6d6" strokeWidth="3" />
              <circle cx="68" cy="9" r="9" fill="#e8302f" />
            </Drawing>
            <ActionName>功能</ActionName>
          </Action>
        </Bottom>
      </Page>
    </>
  );
}
